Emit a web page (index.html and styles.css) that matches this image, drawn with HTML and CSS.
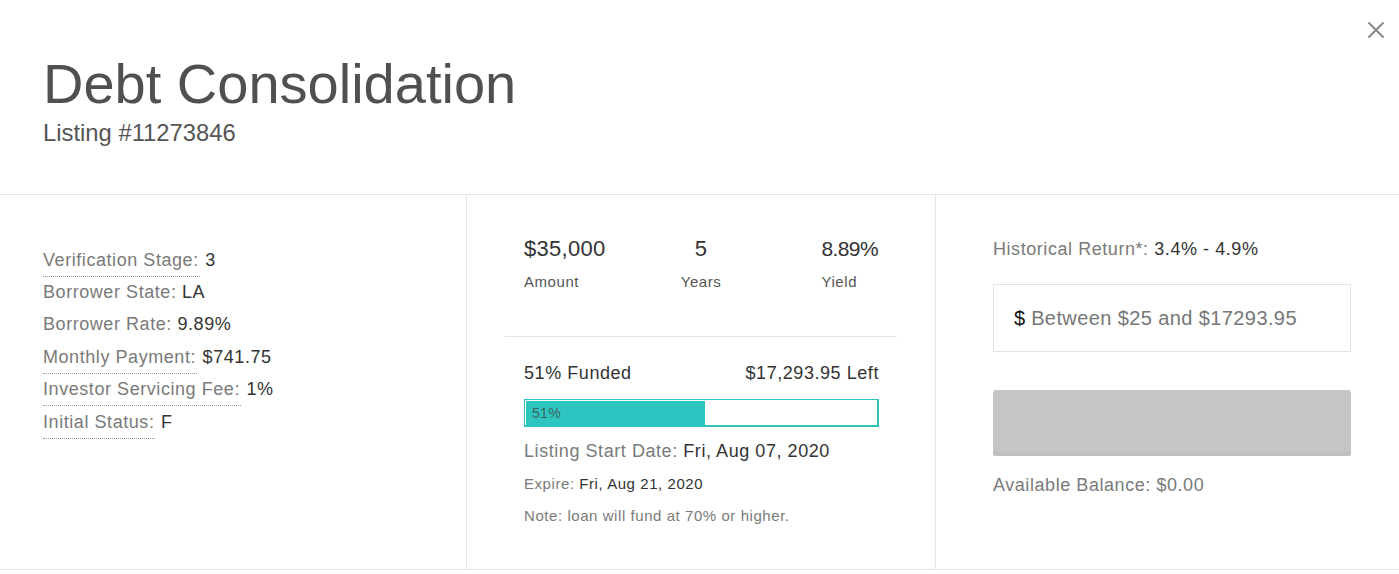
FILE: index.html
```html
<!DOCTYPE html>
<html lang="en">
<head>
<meta charset="utf-8">
<title>Debt Consolidation</title>
<link rel="stylesheet" href="styles.css">
</head>
<body>
<div class="modal">
  <header class="modal-header">
    <h1 class="title">Debt Consolidation</h1>
    <div class="subtitle">Listing #11273846</div>
    <button class="close" aria-label="Close">
      <svg width="18" height="18" viewBox="0 0 18 18"><path d="M1.5 1.5 L16.5 16.5 M16.5 1.5 L1.5 16.5" stroke="#888" stroke-width="2" fill="none"/></svg>
    </button>
  </header>
  <section class="modal-body">
    <div class="col col-info">
      <div class="info-row"><span class="lbl dotted">Verification Stage:</span> <span class="val">3</span></div>
      <div class="info-row"><span class="lbl">Borrower State:</span> <span class="val">LA</span></div>
      <div class="info-row"><span class="lbl">Borrower Rate:</span> <span class="val">9.89%</span></div>
      <div class="info-row"><span class="lbl dotted">Monthly Payment:</span> <span class="val">$741.75</span></div>
      <div class="info-row"><span class="lbl dotted">Investor Servicing Fee:</span> <span class="val">1%</span></div>
      <div class="info-row"><span class="lbl dotted">Initial Status:</span> <span class="val">F</span></div>
    </div>
    <div class="col col-stats">
      <div class="stats">
        <div class="stat stat-left"><div class="stat-val">$35,000</div><div class="stat-lbl">Amount</div></div>
        <div class="stat stat-mid"><div class="stat-val">5</div><div class="stat-lbl">Years</div></div>
        <div class="stat stat-right"><div class="stat-val">8.89%</div><div class="stat-lbl">Yield</div></div>
      </div>
      <div class="funding">
        <div class="funded-row"><span>51% Funded</span><span>$17,293.95 Left</span></div>
        <div class="bar"><div class="bar-fill" style="width:51%">51%</div></div>
        <div class="start"><span class="lbl">Listing Start Date: </span><span class="val">Fri, Aug 07, 2020</span></div>
        <div class="expire"><span class="lbl">Expire: </span><span class="val">Fri, Aug 21, 2020</span></div>
        <div class="note">Note: loan will fund at 70% or higher.</div>
      </div>
    </div>
    <div class="col col-invest">
      <div class="hist"><span class="lbl">Historical Return*: </span><span class="val">3.4% - 4.9%</span></div>
      <div class="amount-input"><span class="cur">$</span><span class="ph">Between $25 and $17293.95</span></div>
      <div class="invest-btn"></div>
      <div class="balance">Available Balance: $0.00</div>
    </div>
  </section>
</div>
</body>
</html>
```
FILE: styles.css
```css
* { box-sizing: border-box; }
html, body { margin: 0; padding: 0; background: #fff; }
body {
  font-family: "Liberation Sans", Arial, sans-serif;
  color: #333;
  width: 1399px;
  height: 574px;
  overflow: hidden;
}
.modal { width: 1399px; }
.modal-header {
  position: relative;
  padding: 52px 43px 47px;
  border-bottom: 1px solid #e6e6e6;
}
.title {
  margin: 0;
  font-size: 56px;
  line-height: 64px;
  font-weight: normal;
  color: #505050;
}
.subtitle {
  margin-top: 3px;
  font-size: 23.8px;
  line-height: 28px;
  color: #555;
}
.close {
  position: absolute;
  top: 21px;
  right: 14px;
  width: 18px;
  height: 18px;
  padding: 0;
  border: 0;
  background: none;
  display: block;
}
.close svg { display: block; }

.modal-body {
  display: grid;
  grid-template-columns: 466px 469px 1fr;
  height: 375px;
  border-bottom: 1px solid #e6e6e6;
  letter-spacing: 0.035em;
}
.col + .col { border-left: 1px solid #e6e6e6; }
.lbl { color: #7a7a7a; }
.val { color: #333; }

.col-info { padding: 48.6px 20px 0 43px; font-size: 18px; }
.info-row { line-height: 32.4px; height: 32.4px; }
.dotted { border-bottom: 1px dotted #999; padding-bottom: 6px; padding-right: 1px; }

.col-stats { padding: 39px 38px 0; }
.stats {
  display: grid;
  grid-template-columns: 1fr 1fr 1fr;
  padding: 0 19px 44px;
  border-bottom: 1px solid #e6e6e6;
}
.stat-val { font-size: 22px; line-height: 30px; color: #333; letter-spacing: 0.3px; }
.stat-lbl { font-size: 15px; line-height: 20px; margin-top: 8px; color: #555; }
.stat-left { justify-self: start; }
.stat-mid { justify-self: center; text-align: center; }
.stat-right { justify-self: end; text-align: left; }
.stat-right .stat-val { letter-spacing: -0.6px; font-size: 21px; }

.funding { padding: 0 18px 0 19px; }
.funded-row {
  display: flex;
  justify-content: space-between;
  font-size: 18px;
  line-height: 24px;
  margin-top: 24px;
  color: #333;
}
.bar {
  margin-top: 14px;
  height: 28px;
  border-style: solid;
  border-color: #2ec4c0;
  border-width: 1px 2px 2px 1px;
  padding: 1px 0 0 1px;
  background: #fff;
}
.bar-fill {
  height: 24px;
  background: #2ec4c0;
  font-size: 14px;
  line-height: 25px;
  padding-left: 6px;
  color: #3d6462;
  letter-spacing: 0.02em;
}
.start { font-size: 18px; line-height: 24px; margin-top: 12px; }
.expire { font-size: 15px; line-height: 20px; margin-top: 11px; }
.note { font-size: 15px; line-height: 20px; margin-top: 12px; color: #7a7a7a; }

.col-invest { padding: 42px 48px 0 57px; }
.hist { font-size: 18px; line-height: 24px; }
.amount-input {
  margin-top: 23px;
  height: 68px;
  border: 1px solid #e2e2e2;
  padding: 0 20px;
  display: flex;
  align-items: center;
  font-size: 20px;
  white-space: nowrap;
}
.cur { color: #111; margin-right: 6px; letter-spacing: 0; }
.ph { color: #777; letter-spacing: 0.02em; }
.invest-btn {
  margin-top: 38px;
  height: 66px;
  background: #c6c6c6;
  border-radius: 3px;
  box-shadow: inset 0 -5px 0 #c0c0c0;
}
.balance {
  margin-top: 17px;
  font-size: 18px;
  line-height: 24px;
  color: #7a7a7a;
}
```
